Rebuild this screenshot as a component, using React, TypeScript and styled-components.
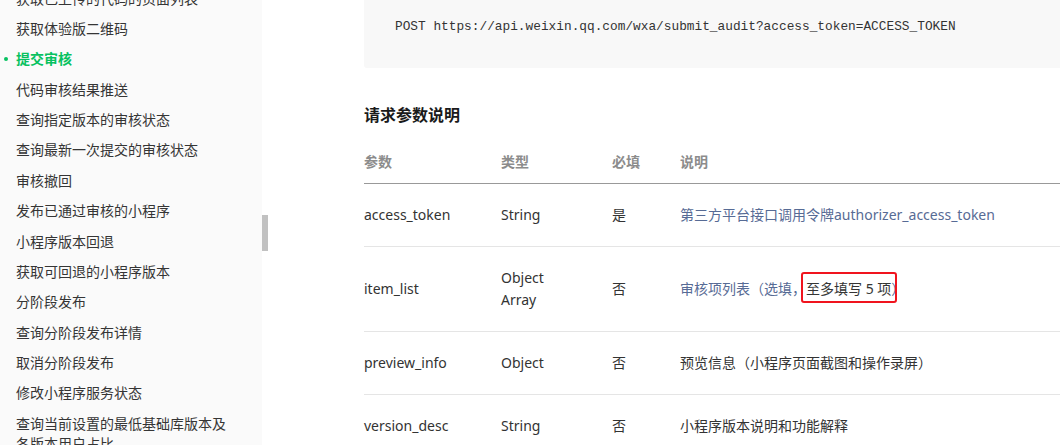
import React, { ReactElement } from 'react';
import styled, { createGlobalStyle } from 'styled-components';

const GlobalStyle = createGlobalStyle`
	html, body {
		margin: 0;
		padding: 0;
		background: #fff;
		overflow: hidden;
	}
	body {
		font-family: 'Noto Sans', 'Noto Sans CJK SC', sans-serif;
		color: #333;
	}
`;

const NAV_ITEMS = [
	'获取已上传的代码的页面列表',
	'获取体验版二维码',
	'提交审核',
	'代码审核结果推送',
	'查询指定版本的审核状态',
	'查询最新一次提交的审核状态',
	'审核撤回',
	'发布已通过审核的小程序',
	'小程序版本回退',
	'获取可回退的小程序版本',
	'分阶段发布',
	'查询分阶段发布详情',
	'取消分阶段发布',
	'修改小程序服务状态',
	'查询当前设置的最低基础库版本及各版本用户占比',
];

interface IParam {
	name: string;
	type: string[];
	required: string;
	desc: ReactElement;
}

const PARAMS: IParam[] = [
	{
		name: 'access_token',
		type: ['String'],
		required: '是',
		desc: <Link>第三方平台接口调用令牌authorizer_access_token</Link>,
	},
	{
		name: 'item_list',
		type: ['Object', 'Array'],
		required: '否',
		desc: (
			<>
				<Link>审核项列表（选填，</Link>
				<Marked>至多填写 5 项</Marked>
				<Link>）</Link>
			</>
		),
	},
	{
		name: 'preview_info',
		type: ['Object'],
		required: '否',
		desc: <>预览信息（小程序页面截图和操作录屏）</>,
	},
	{
		name: 'version_desc',
		type: ['String'],
		required: '否',
		desc: <>小程序版本说明和功能解释</>,
	},
];

export default function App(): ReactElement {
	return (
		<>
			<GlobalStyle />
			<StyledPage>
				<StyledSidebar>
					<StyledNavList>
						{NAV_ITEMS.map((item) => (
							<StyledNavItem key={item} active={item === '提交审核'}>
								{item}
							</StyledNavItem>
						))}
					</StyledNavList>
				</StyledSidebar>
				<StyledScrollTrack>
					<StyledThumb />
				</StyledScrollTrack>
				<StyledMain>
					<StyledCode>POST https://api.weixin.qq.com/wxa/submit_audit?access_token=ACCESS_TOKEN</StyledCode>
					<StyledHeading>请求参数说明</StyledHeading>
					<StyledTable>
						<colgroup>
							<col style={{ width: 137 }} />
							<col style={{ width: 111 }} />
							<col style={{ width: 68 }} />
							<col />
						</colgroup>
						<thead>
							<tr>
								<StyledTh>参数</StyledTh>
								<StyledTh>类型</StyledTh>
								<StyledTh>必填</StyledTh>
								<StyledTh>说明</StyledTh>
							</tr>
						</thead>
						<tbody>
							{PARAMS.map((p) => (
								<tr key={p.name}>
									<StyledTd>{p.name}</StyledTd>
									<StyledTd>
										{p.type.map((t) => (
											<div key={t}>{t}</div>
										))}
									</StyledTd>
									<StyledTd>{p.required}</StyledTd>
									<StyledTd>{p.desc}</StyledTd>
								</tr>
							))}
						</tbody>
					</StyledTable>
				</StyledMain>
			</StyledPage>
		</>
	);
}

function Link({ children }: { children: React.ReactNode }): ReactElement {
	return <StyledLink>{children}</StyledLink>;
}

function Marked({ children }: { children: React.ReactNode }): ReactElement {
	return <StyledMarked>{children}</StyledMarked>;
}

const StyledPage = styled.div`
	display: flex;
	height: 445px;
	width: 1060px;
	overflow: hidden;
`;

const StyledSidebar = styled.nav`
	width: 262px;
	flex: none;
	background: #fafafa;
	overflow: hidden;
`;

const StyledNavList = styled.ul`
	list-style: none;
	margin: -17.6px 0 0;
	padding: 0;
`;

const StyledNavItem = styled.li<{ active?: boolean }>`
	position: relative;
	padding: 5.19px 30px 5.19px 16px;
	font-family: 'Noto Sans CJK SC', sans-serif;
	font-size: 14px;
	line-height: 20px;
	color: ${({ active }): string => (active ? '#07c160' : '#353535')};
	font-weight: ${({ active }): string => (active ? '700' : '400')};

	&::before {
		content: '';
		display: ${({ active }): string => (active ? 'block' : 'none')};
		position: absolute;
		left: 4px;
		top: 50%;
		width: 4px;
		height: 4px;
		margin-top: -1px;
		border-radius: 50%;
		background: #07c160;
	}
`;

const StyledScrollTrack = styled.div`
	width: 6px;
	flex: none;
	padding-top: 215px;
`;

const StyledThumb = styled.div`
	height: 36px;
	background: #c1c1c1;
`;

const StyledMain = styled.main`
	flex: none;
	width: 900px;
	margin-left: 96px;
`;

const StyledCode = styled.pre`
	margin: 0;
	padding: 17px 31px 31px;
	background: #f8f8f8;
	border-radius: 0 0 3px 3px;
	font-family: 'Liberation Mono', monospace;
	font-size: 12.8px;
	line-height: 20px;
	color: #333;
`;

const StyledHeading = styled.h3`
	margin: 34px 0 0;
	font-family: 'Noto Sans CJK SC', sans-serif;
	font-size: 16px;
	line-height: 24px;
	font-weight: 700;
	color: #1a1a1a;
`;

const StyledTable = styled.table`
	width: 900px;
	margin-top: 13px;
	table-layout: fixed;
	border-collapse: collapse;
	font-size: 14px;
	line-height: 22px;
	text-align: left;
`;

const StyledTh = styled.th`
	padding: 11px 0 10px;
	font-family: 'Noto Sans CJK SC', sans-serif;
	font-weight: 700;
	color: #8c8c8c;
	line-height: 23px;
	border-bottom: 1px solid #999;
`;

const StyledTd = styled.td`
	padding: 20px 0;
	vertical-align: middle;
	color: #333;
	border-bottom: 1px solid #e5e5e5;
	font-family: 'Noto Sans', 'Noto Sans CJK SC', sans-serif;
`;

const StyledLink = styled.span`
	color: #576b95;
`;

const StyledMarked = styled.span`
	position: relative;
	color: #353535;

	&::after {
		content: '';
		position: absolute;
		left: -5px;
		right: -6px;
		top: -7px;
		bottom: -5px;
		border: 2px solid #f0141e;
		border-radius: 3px;
	}
`;
